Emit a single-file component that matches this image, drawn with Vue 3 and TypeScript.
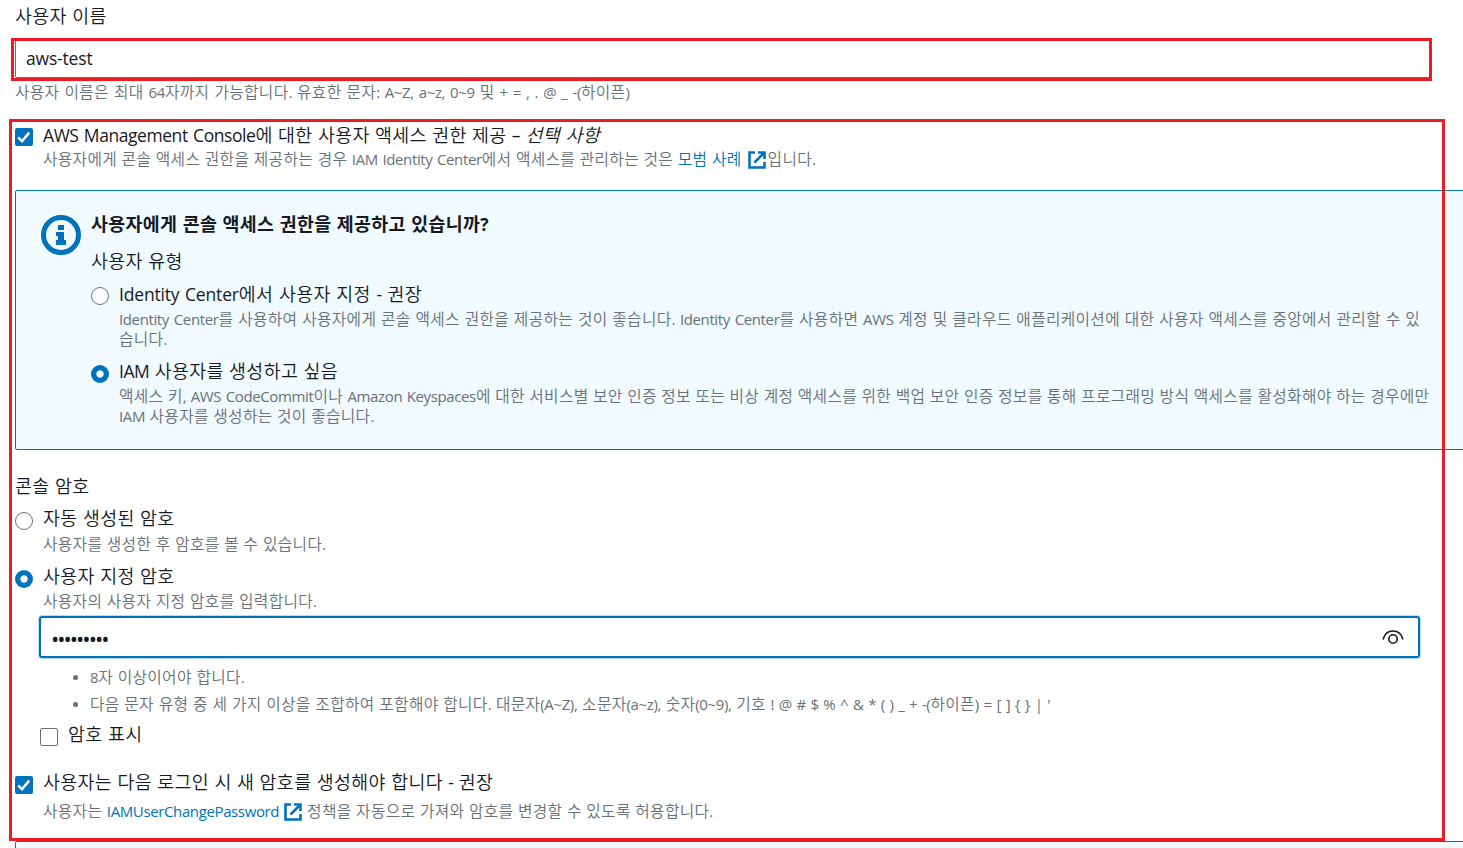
<template>
  <div class="page">
    <section class="user-name">
      <label class="label" for="user-name"><MixedText text="사용자 이름" /></label>
      <input id="user-name" v-model="userName" class="text-input" type="text" />
      <p class="hint name-hint"><MixedText text="사용자 이름은 최대 64자까지 가능합니다. 유효한 문자: A~Z, a~z, 0~9 및 + = , . @ _ -(하이픈)" /></p>
    </section>

    <div class="option console-access">
      <button class="check" :class="{ on: consoleAccess }" @click="consoleAccess = !consoleAccess">
        <svg v-if="consoleAccess" viewBox="0 0 18 18"><path d="M3.2 9.4 7 13.2 14.2 4.6" /></svg>
      </button>
      <div>
        <div class="label">
          <MixedText text="AWS Management Console에 대한 사용자 액세스 권한 제공 – " /><em><MixedText text="선택 사항" /></em>
        </div>
        <p class="hint">
          <MixedText text="사용자에게 콘솔 액세스 권한을 제공하는 경우 IAM Identity Center에서 액세스를 관리하는 것은 " />
          <a class="link"><MixedText text="모범 사례" /></a>
          <svg class="external practice-icon" viewBox="0 0 18 18"><path d="M7 1.5H1.5v15h15V11M10 1.5h6.5V8M16 2 6.5 11.5" /></svg>
          <MixedText text="입니다." />
        </p>
      </div>
    </div>

    <section class="alert">
      <svg class="info" viewBox="0 0 40 40">
        <circle cx="20" cy="20" r="17.5" />
        <path d="M17 10h6v5h-6zM15 17h8v8h2v5H15v-5h2v-4h-2z" />
      </svg>
      <div class="alert-body">
        <h3 class="label"><MixedText text="사용자에게 콘솔 액세스 권한을 제공하고 있습니까?" /></h3>
        <div class="label type-label"><MixedText text="사용자 유형" /></div>
        <div v-for="item in userTypes" :key="item.id" class="option user-type" :class="item.id">
          <button class="radio" :class="{ on: userType === item.id }" @click="userType = item.id"></button>
          <div>
            <div class="label"><MixedText :text="item.label" /></div>
            <p v-for="line in item.lines" :key="line" class="hint"><MixedText :text="line" /></p>
          </div>
        </div>
      </div>
    </section>

    <section class="password">
      <div class="label"><MixedText text="콘솔 암호" /></div>
      <div v-for="item in passwordTypes" :key="item.id" class="option password-type" :class="item.id">
        <button class="radio" :class="{ on: passwordType === item.id }" @click="passwordType = item.id"></button>
        <div>
          <div class="label"><MixedText :text="item.label" /></div>
          <p class="hint"><MixedText :text="item.hint" /></p>
        </div>
      </div>

      <div class="password-field">
        <input v-model="password" :type="showPassword ? 'text' : 'password'" />
        <svg class="eye" viewBox="0 0 24 18" @click="showPassword = !showPassword">
          <path d="M2 11.5C3.3 6.3 7.2 3 12 3s8.7 3.3 10 8.5" />
          <circle cx="12" cy="11" r="4.2" />
        </svg>
      </div>

      <ul class="rules">
        <li v-for="rule in rules" :key="rule" class="hint"><MixedText :text="rule" /></li>
      </ul>

      <div class="option show-password">
        <button class="check" :class="{ on: showPassword }" @click="showPassword = !showPassword">
          <svg v-if="showPassword" viewBox="0 0 18 18"><path d="M3.2 9.4 7 13.2 14.2 4.6" /></svg>
        </button>
        <div class="label"><MixedText text="암호 표시" /></div>
      </div>
    </section>

    <div class="option must-change">
      <button class="check" :class="{ on: mustChange }" @click="mustChange = !mustChange">
        <svg v-if="mustChange" viewBox="0 0 18 18"><path d="M3.2 9.4 7 13.2 14.2 4.6" /></svg>
      </button>
      <div>
        <div class="label"><MixedText text="사용자는 다음 로그인 시 새 암호를 생성해야 합니다 - 권장" /></div>
        <p class="hint">
          <MixedText text="사용자는 " />
          <a class="link policy"><MixedText text="IAMUserChangePassword" /></a>
          <svg class="external policy-icon" viewBox="0 0 18 18"><path d="M7 1.5H1.5v15h15V11M10 1.5h6.5V8M16 2 6.5 11.5" /></svg>
          <MixedText text="정책을 자동으로 가져와 암호를 변경할 수 있도록 허용합니다." />
        </p>
      </div>
    </div>

    <section class="alert next-alert"></section>

    <div class="marker marker-name"></div>
    <div class="marker marker-console"></div>
  </div>
</template>

<script setup lang="ts">
import { h, ref } from 'vue';

interface UserType {
  id: string;
  label: string;
  lines: string[];
}

// Hangul needs its own size and tracking, so it is wrapped separately from Latin text
const MixedText = (props: { text: string }) =>
  h('span', { class: 'mixed' }, props.text.split(/([가-힣]+)/).filter(Boolean).map(part =>
    h('span', { class: /[가-힣]/.test(part) ? 'ko' : 'en' }, part)
  ));
MixedText.props = ['text'];

const userName = ref('aws-test');
const password = ref('Passw0rd!');
const consoleAccess = ref(true);
const showPassword = ref(false);
const mustChange = ref(true);
const userType = ref('iam');
const passwordType = ref('custom');

const userTypes: UserType[] = [
  {
    id: 'identity',
    label: 'Identity Center에서 사용자 지정 - 권장',
    lines: [
      'Identity Center를 사용하여 사용자에게 콘솔 액세스 권한을 제공하는 것이 좋습니다. Identity Center를 사용하면 AWS 계정 및 클라우드 애플리케이션에 대한 사용자 액세스를 중앙에서 관리할 수 있',
      '습니다.',
    ],
  },
  {
    id: 'iam',
    label: 'IAM 사용자를 생성하고 싶음',
    lines: [
      '액세스 키, AWS CodeCommit이나 Amazon Keyspaces에 대한 서비스별 보안 인증 정보 또는 비상 계정 액세스를 위한 백업 보안 인증 정보를 통해 프로그래밍 방식 액세스를 활성화해야 하는 경우에만',
      'IAM 사용자를 생성하는 것이 좋습니다.',
    ],
  },
];

const passwordTypes = [
  { id: 'auto', label: '자동 생성된 암호', hint: '사용자를 생성한 후 암호를 볼 수 있습니다.' },
  { id: 'custom', label: '사용자 지정 암호', hint: '사용자의 사용자 지정 암호를 입력합니다.' },
];

const rules = [
  '8자 이상이어야 합니다.',
  "다음 문자 유형 중 세 가지 이상을 조합하여 포함해야 합니다. 대문자(A~Z), 소문자(a~z), 숫자(0~9), 기호 ! @ # $ % ^ & * ( ) _ + -(하이픈) = [ ] { } | '",
];
</script>

<style>
body {
  margin: 0;
  background: #fff;
}
</style>

<style scoped>
.page {
  position: relative;
  box-sizing: border-box;
  width: 1463px;
  height: 848px;
  padding: 3px 0 0 15px;
  overflow: hidden;
  color: #16191f;
  background: #fff;
  font-family: "Open Sans", "Noto Sans CJK KR", sans-serif;
  font-size: 17.5px;
}

.label {
  height: 27px;
  margin: 0;
  font-size: 17.5px;
  font-weight: 400;
  line-height: 27px;
  white-space: nowrap;
}

.hint {
  display: flex;
  height: 20px;
  margin: 0;
  color: #687078;
  font-size: 15px;
  line-height: 20px;
  white-space: nowrap;
}

.page :deep(.mixed) {
  white-space: pre;
}

.page :deep(.ko) {
  font-family: "Noto Sans CJK KR", sans-serif;
  font-size: 1.05em;
  font-weight: 350;
  letter-spacing: 0.02em;
  line-height: 0;
}

.page :deep(.en) {
  letter-spacing: -0.025em;
  word-spacing: 0.07em;
}

.user-name {
  display: flex;
  flex-direction: column;
}

.text-input {
  box-sizing: border-box;
  width: 1416px;
  height: 38px;
  margin-top: 10px;
  padding: 0 10px 3px;
  border: 1px solid #687078;
  border-radius: 2px;
  color: #16191f;
  font-family: inherit;
  font-size: 17.5px;
  letter-spacing: -0.01em;
  outline: none;
}

.name-hint {
  margin-top: 4px;
}

.name-hint :deep(.en) {
  word-spacing: 0.1em;
}

.option {
  display: flex;
}

.check,
.radio {
  box-sizing: border-box;
  flex: none;
  width: 18px;
  height: 18px;
  margin: 6px 10px 0 0;
  padding: 0;
  border: 1px solid #687078;
  background: #fff;
}

.check {
  border-radius: 2px;
}

.check.on {
  border: 0;
  background: #0073bb;
}

.check svg {
  display: block;
  width: 18px;
  height: 18px;
  fill: none;
  stroke: #fff;
  stroke-width: 2.5;
}

.radio {
  margin-top: 7px;
  border-radius: 50%;
}

.radio.on {
  border: 0;
  background: radial-gradient(circle, #fff 3.2px, #0073bb 4.1px);
}

.link {
  color: #0073bb;
}

.external {
  flex: none;
  width: 18px;
  height: 18px;
  margin-top: 2px;
  fill: none;
  stroke: #0073bb;
  stroke-width: 2.6;
}

.console-access {
  margin-top: 20px;
}

.practice-icon {
  margin-left: 6px;
  margin-right: 2px;
}

.alert {
  display: flex;
  box-sizing: border-box;
  width: 1470px;
  height: 260px;
  margin-top: 21px;
  padding: 19px 0 0 25px;
  border: 1px solid #0073bb;
  border-radius: 2px;
  background: #f1faff;
}

.info {
  flex: none;
  width: 40px;
  height: 40px;
  margin: 5px 10px 0 0;
  fill: #0073bb;
}

.info circle {
  fill: none;
  stroke: #0073bb;
  stroke-width: 5;
}

h3.label,
h3.label :deep(.ko) {
  font-weight: 700;
}

h3.label {
  line-height: 28px;
}

.type-label {
  margin-top: 11px;
}

.user-type {
  margin-top: 6px;
}

.user-type + .user-type {
  margin-top: 9px;
}

.user-type .label {
  margin-bottom: 1px;
}

.user-type.identity .radio {
  margin-top: 6px;
}

.user-type.identity .label :deep(.en) {
  letter-spacing: -0.01em;
}

.user-type.identity .hint :deep(.en) {
  word-spacing: 0.085em;
}

.user-type.iam .hint :deep(.en) {
  word-spacing: 0.065em;
}

.password {
  margin-top: 23px;
}

.password-type.auto {
  margin-top: 5px;
}

.password-type.auto .hint {
  margin-top: 2px;
}

.password-type.custom {
  margin-top: 9px;
}

.password-type.custom .hint {
  margin-top: 1px;
}

.password-field {
  display: flex;
  align-items: center;
  box-sizing: border-box;
  width: 1381px;
  height: 42px;
  margin: 5px 0 0 24px;
  border: 2px solid #0073bb;
  border-radius: 3px;
  box-shadow: 0 0 0 1px #b8dcf0;
}

.password-field input {
  flex: 1;
  padding: 2px 10px 0;
  border: 0;
  color: #16191f;
  background: transparent;
  font-family: inherit;
  font-size: 22px;
  letter-spacing: -2px;
  outline: none;
}

.eye {
  width: 24px;
  height: 18px;
  margin-right: 13px;
  fill: none;
  stroke: #16191f;
  stroke-width: 1.6;
}

.rules {
  margin: 9px 0 0;
  padding: 0 0 0 58px;
  list-style: none;
}

.rules li {
  align-items: center;
}

.rules li + li {
  margin-top: 7px;
}

.rules li::before {
  width: 5px;
  height: 5px;
  margin-right: 12px;
  border-radius: 50%;
  background: #687078;
  content: "";
}

.rules :deep(.en) {
  word-spacing: 0.077em;
}

.show-password {
  margin: 7px 0 0 25px;
}

.show-password .check,
.must-change .check {
  margin-top: 7px;
}

.must-change {
  margin-top: 21px;
}

.must-change .hint {
  margin-top: 5px;
}

.policy-icon {
  margin: 2px 5px 0;
}

.next-alert {
  margin-top: 20px;
}

/* Highlight frames laid over the form */
.marker {
  position: absolute;
  box-sizing: border-box;
  border: 3px solid #ed1c24;
  pointer-events: none;
}

.marker-name {
  top: 38px;
  left: 11px;
  width: 1421px;
  height: 43px;
}

.marker-console {
  top: 119px;
  left: 9px;
  width: 1436px;
  height: 722px;
}
</style>
